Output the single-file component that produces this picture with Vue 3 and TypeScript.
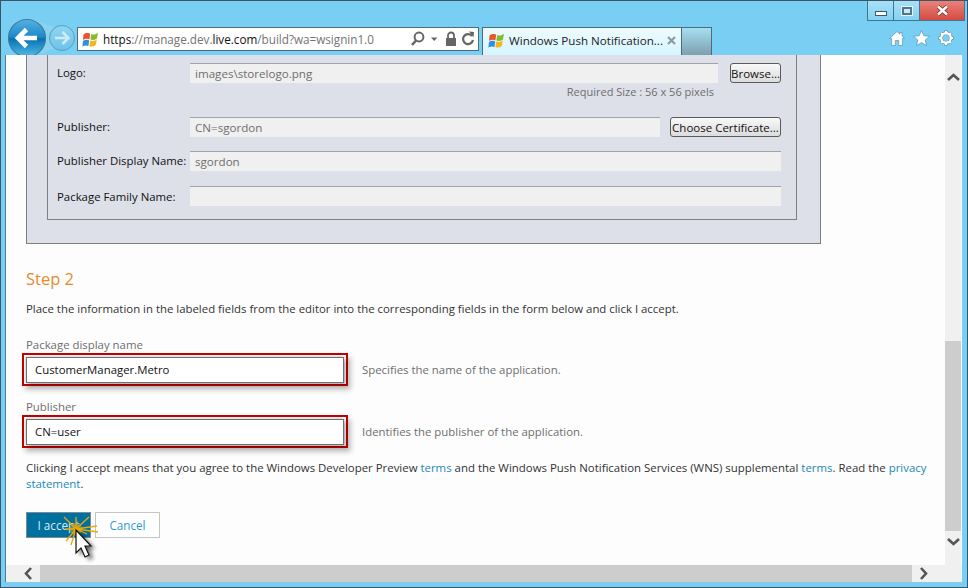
<script setup lang="ts">
const flagPanes = [
  { d: "M0.5 3.5 C2.5 2 5 1.6 7.2 2.6 L6.4 8.4 C4.4 7.4 2 7.8 0 9 Z", fill: "#e8562a" },
  { d: "M8.2 3 C10.4 4 12.6 3.6 15 1.8 L14 7.4 C11.8 9 9.6 9.4 7.4 8.6 Z", fill: "#86bc2b" },
  { d: "M0 10 C2 8.8 4.2 8.4 6.2 9.4 L5.4 15 C3.4 14 1.2 14.4 -0.6 15.6 Z", fill: "#2d8fe0" },
  { d: "M7.2 9.6 C9.4 10.4 11.6 10 13.8 8.4 L12.8 14 C10.6 15.6 8.4 16 6.4 15.2 Z", fill: "#f5b71d" },
];
</script>

<template>
  <div class="window">
    <header class="chrome">
      <div class="caption">
        <button class="cap cap-min"><span class="min-glyph"></span></button>
        <button class="cap cap-max"><span class="max-glyph"></span></button>
        <button class="cap cap-close">
          <svg width="15" height="11" viewBox="0 0 15 11">
            <path d="M3 1.5 L12 9.5 M12 1.5 L3 9.5" stroke="#7c2f2a" stroke-width="4" />
            <path d="M3 1.5 L12 9.5 M12 1.5 L3 9.5" stroke="#fff" stroke-width="2.4" />
          </svg>
        </button>
      </div>
      <div class="navbar">
        <div class="nav-btns">
          <svg class="back" width="76" height="46" viewBox="0 0 76 46">
            <defs>
              <linearGradient id="backFill" x1="0" y1="0" x2="0" y2="1">
                <stop offset="0" stop-color="#55b2e0" />
                <stop offset="0.48" stop-color="#1c88c8" />
                <stop offset="0.52" stop-color="#0870b2" />
                <stop offset="1" stop-color="#52bbea" />
              </linearGradient>
              <linearGradient id="fwdFill" x1="0" y1="0" x2="0" y2="1">
                <stop offset="0" stop-color="#8ed6f4" />
                <stop offset="1" stop-color="#6cc3e8" />
              </linearGradient>
            </defs>
            <path d="M30 5 C38 6 42 11 52 12 L54 34 L40 40 Z" fill="#8ad3ef" />
            <circle cx="26" cy="24" r="18.5" fill="url(#backFill)" stroke="#3f7a9e" stroke-width="1.2" />
            <path d="M17 24 H36 M25.5 15.5 L17 24 L25.5 32.5" fill="none" stroke="#fff" stroke-width="4.6" />
            <circle cx="61" cy="24" r="12.5" fill="url(#fwdFill)" stroke="#5d9dbd" stroke-width="1" />
            <path d="M54 24 H67 M61.5 18 L67.5 24 L61.5 30" fill="none" stroke="#cfe9f5" stroke-width="2.6" />
          </svg>
        </div>
        <div class="address">
          <svg class="flag" width="17" height="17" viewBox="-1 0 17 17">
            <path v-for="p in flagPanes" :key="p.d" :d="p.d" :fill="p.fill" />
          </svg>
          <span class="url"><b>https</b>://manage.dev.<b>live.com</b>/build?wa=wsignin1.0</span>
          <svg class="addr-icons" width="66" height="18" viewBox="0 0 66 18">
            <circle cx="9" cy="7" r="4.4" fill="none" stroke="#666" stroke-width="2" />
            <path d="M6 10.5 L2 15" stroke="#666" stroke-width="2.6" />
            <path d="M21 7.5 H27.5 L24.2 11 Z" fill="#666" />
            <path d="M38 8 V5.5 A3 3 0 0 1 44 5.5 V8" fill="none" stroke="#666" stroke-width="1.8" />
            <rect x="36" y="8" width="10" height="8" fill="#666" />
            <path d="M62 6 A5 5 0 1 0 63 10" fill="none" stroke="#666" stroke-width="2.2" />
            <path d="M59 1.5 L64 2 L63.5 7.5 Z" fill="#666" />
          </svg>
        </div>
        <div class="tab">
          <svg class="flag" width="17" height="17" viewBox="-1 0 17 17">
            <path v-for="p in flagPanes" :key="p.d" :d="p.d" :fill="p.fill" />
          </svg>
          <span class="tab-title">Windows Push Notification...</span>
          <svg class="tab-x" width="9" height="9" viewBox="0 0 9 9"><path d="M1 1 L8 8 M8 1 L1 8" stroke="#8d9aa1" stroke-width="2.2" /></svg>
        </div>
        <div class="new-tab"></div>
        <div class="tools">
          <svg width="16" height="15" viewBox="0 0 16 15"><path d="M8 0.5 L11 3.2 V1.5 H13 V5 L15.5 7.5 H13.4 V14.5 H9.7 V9.5 H6.3 V14.5 H2.6 V7.5 H0.5 Z" fill="#fff" stroke="#4f87a3" stroke-width="0.6" /></svg>
          <svg width="17" height="16" viewBox="0 0 17 16"><path d="M8.5 0.5 L10.8 5.8 L16.5 6.2 L12.2 10 L13.5 15.5 L8.5 12.6 L3.5 15.5 L4.8 10 L0.5 6.2 L6.2 5.8 Z" fill="#fff" stroke="#4f87a3" stroke-width="0.6" /></svg>
          <svg width="16" height="16" viewBox="0 0 16 16">
            <g stroke="#4f87a3" fill="none">
              <circle cx="8" cy="8" r="4.8" stroke-width="3.4" />
              <path d="M8 0.5 V3.5 M8 12.5 V15.5 M0.5 8 H3.5 M12.5 8 H15.5 M2.7 2.7 L4.8 4.8 M11.2 11.2 L13.3 13.3 M13.3 2.7 L11.2 4.8 M4.8 11.2 L2.7 13.3" stroke-width="3" />
            </g>
            <g stroke="#fff" fill="none">
              <circle cx="8" cy="8" r="4.8" stroke-width="2.4" />
              <path d="M8 1 V3.5 M8 12.5 V15 M1 8 H3.5 M12.5 8 H15 M3 3 L4.8 4.8 M11.2 11.2 L13 13 M13 3 L11.2 4.8 M4.8 11.2 L3 13" stroke-width="2.2" />
            </g>
          </svg>
        </div>
      </div>
    </header>

    <div class="viewport">
      <div class="view-main">
        <main class="page">
          <section class="panel">
            <div class="manifest">
              <div class="row row-logo">
                <label>Logo:</label>
                <div class="field">images\storelogo.png</div>
                <button class="win-btn btn-browse">Browse...</button>
              </div>
              <p class="req">Required Size : 56 x 56 pixels</p>
              <div class="row row-pub">
                <label>Publisher:</label>
                <div class="field">CN=sgordon</div>
                <button class="win-btn btn-cert">Choose Certificate...</button>
              </div>
              <div class="row row-disp">
                <label>Publisher Display Name:</label>
                <div class="field">sgordon</div>
              </div>
              <div class="row row-fam">
                <label>Package Family Name:</label>
                <div class="field"></div>
              </div>
            </div>
          </section>

          <h2>Step 2</h2>
          <p class="intro">Place the information in the labeled fields from the editor into the corresponding fields in the form below and click I accept.</p>

          <div class="lbl lbl-first">Package display name</div>
          <div class="entry">
            <div class="hl"><div class="text-in">CustomerManager.Metro</div></div>
            <span class="hint">Specifies the name of the application.</span>
          </div>
          <div class="lbl lbl-second">Publisher</div>
          <div class="entry">
            <div class="hl"><div class="text-in">CN=user</div></div>
            <span class="hint">Identifies the publisher of the application.</span>
          </div>

          <p class="legal">Clicking I accept means that you agree to the Windows Developer Preview <a>terms</a> and the Windows Push Notification Services (WNS) supplemental <a>terms</a>. Read the <a>privacy statement</a>.</p>

          <div class="actions">
            <button class="accept">I accept</button>
            <button class="cancel">Cancel</button>
            <svg class="pointer" width="64" height="64" viewBox="0 0 64 64">
              <defs>
                <filter id="curShadow" x="-50%" y="-50%" width="200%" height="200%"><feGaussianBlur stdDeviation="2.2" /></filter>
              </defs>
              <circle cx="25" cy="21" r="6" fill="#8f9a3a" opacity="0.8" />
              <g stroke="#eda808" stroke-width="1.3" fill="none">
                <path d="M25 21 L25 9 M25 21 L13 9 M25 21 L38 9 M25 21 L46 18 M25 21 L47 24 M25 21 L14 21 M25 21 L15 33 M25 21 L20 37 M25 21 L36 26" />
              </g>
              <path d="M25 22 V45 L30 40 L34 49 L38 47 L34 38 L40 38 Z" fill="#111" opacity="0.65" filter="url(#curShadow)" transform="translate(4 3)" />
              <path d="M25 22 V45 L30 40 L34 49 L38 47 L34 38 L40 38 Z" fill="#fff" stroke="#111" stroke-width="1.2" />
            </svg>
          </div>
        </main>
        <aside class="vscroll">
          <svg width="13" height="8" viewBox="0 0 13 8"><path d="M1 7 L6.5 2 L12 7" fill="none" stroke="#555" stroke-width="2.6" /></svg>
          <div class="vtrack"><div class="vthumb"></div></div>
          <svg width="13" height="8" viewBox="0 0 13 8"><path d="M1 1 L6.5 6 L12 1" fill="none" stroke="#555" stroke-width="2.6" /></svg>
        </aside>
      </div>
      <div class="hscroll">
        <svg width="8" height="13" viewBox="0 0 8 13"><path d="M7 1 L2 6.5 L7 12" fill="none" stroke="#555" stroke-width="2.6" /></svg>
        <div class="hthumb"></div>
        <svg width="8" height="13" viewBox="0 0 8 13"><path d="M1 1 L6 6.5 L1 12" fill="none" stroke="#555" stroke-width="2.6" /></svg>
      </div>
    </div>
  </div>
</template>

<style>
html, body { margin: 0; overflow: hidden; }
</style>

<style scoped>
* { box-sizing: border-box; }
.window {
  width: 968px;
  height: 588px;
  background: #78cff3;
  border: 1px solid #3c5566;
  padding: 0 5px 5px 4px;
  display: flex;
  flex-direction: column;
  font-family: "Open Sans", "Noto Sans", sans-serif;
  font-size: 11.3px;
  position: relative;
  overflow: hidden;
}
.chrome { height: 54px; position: relative; flex: none; }
.caption {
  position: absolute;
  top: 0;
  right: -3px;
  display: flex;
  height: 20px;
  border: 1px solid #3f7590;
  border-top: 0;
}
.cap {
  padding: 0;
  border: 0;
  display: flex;
  align-items: center;
  justify-content: center;
  width: 26px;
  background: linear-gradient(#a8e0f7, #84d2f2);
  border-right: 1px solid #3f7590;
}
.cap-close { width: 44px; background: linear-gradient(#e8837a, #d54a40); border-right: 0; }
.min-glyph { width: 12px; height: 5px; background: #fff; border: 1px solid #3c5b6c; margin-top: 6px; }
.max-glyph { width: 10px; height: 8px; border: 2px solid #55768a; background: #c6ebf8; box-shadow: 0 0 0 1px #e2f5fc; }
.navbar {
  position: absolute;
  left: -4px;
  right: 0;
  top: 15px;
  height: 39px;
  display: flex;
  align-items: flex-end;
}
.nav-btns { width: 76px; height: 46px; flex: none; margin-bottom: -5px; align-self: flex-end; }
.back { display: block; }
.address {
  width: 402px;
  height: 24px;
  margin-bottom: 4px;
  background: #fff;
  border: 1px solid #4e6b7c;
  display: flex;
  align-items: center;
  padding-left: 4px;
  flex: none;
}
.flag { flex: none; }
.url { margin-left: 4px; font-size: 11.7px; color: #737373; white-space: nowrap; flex: 1; }
.url b { font-weight: 400; color: #111; }
.addr-icons { margin-right: 2px; flex: none; }
.tab {
  margin-left: 3px;
  width: 200px;
  height: 28px;
  background: linear-gradient(#eefbff, #d6f5ff);
  border: 1px solid #4e6b7c;
  border-bottom: 0;
  display: flex;
  align-items: center;
  padding: 0 0 2px 5px;
  flex: none;
}
.tab-title { font-size: 11.6px; color: #222; margin-left: 4px; white-space: nowrap; flex: 1; }
.tab-x { margin-right: 5px; }
.new-tab {
  width: 30px;
  height: 28px;
  background: linear-gradient(#a6def2, #7e9fae);
  border: 1px solid #4e6b7c;
  border-left: 0;
  border-bottom: 0;
  flex: none;
}
.tools {
  margin-left: auto;
  margin-right: 8px;
  margin-bottom: 9px;
  display: flex;
  gap: 8px;
  align-items: center;
}
.viewport {
  flex: 1;
  min-height: 0;
  display: flex;
  flex-direction: column;
  border-left: 1px solid #4e7f98;
  background: #fdfdfd;
}
.view-main { flex: 1; min-height: 0; display: flex; }
.page { width: 939px; padding-left: 20px; padding-right: 12px; flex: none; background: #fdfdfd; color: #3a3a3a; position: relative; }
.panel {
  width: 795px;
  height: 189px;
  background: #dde0e8;
  border: 1px solid #7f7f7f;
  border-top: 0;
  padding: 0 23px 0 20px;
}
.manifest {
  height: 165px;
  border: 1px solid #7f7f7f;
  border-top: 0;
  padding: 8px 15px 0 9px;
  color: #111;
}
.row { display: flex; align-items: center; height: 20px; }
.row label { width: 133px; flex: none; font-size: 11.4px; white-space: nowrap; position: relative; top: -1px; }
.row-fam label { top: 0; }
.field {
  flex: 1;
  height: 20px;
  background: #f0f0f0;
  border-top: 1px solid #a2a2aa;
  color: #6e6e6e;
  padding-left: 5px;
  line-height: 19px;
  font-size: 11.6px;
}
.row-pub { margin-top: 10px; }
.row-disp { margin-top: 14px; }
.row-fam { margin-top: 15px; }
.req { margin: 0; height: 24px; text-align: right; padding: 1px 67px 0 0; color: #6e6e6e; font-size: 11px; line-height: 16px; }
.win-btn {
  height: 20px;
  border: 1px solid #5a5a5a;
  border-radius: 3px;
  background: linear-gradient(#f8f8f8, #dcdcdc);
  font: inherit;
  font-size: 11.5px;
  color: #111;
  padding: 0;
  flex: none;
  white-space: nowrap;
}
.btn-browse { width: 51px; margin-left: 12px; }
.btn-cert { width: 111px; margin-left: 10px; }
h2 {
  margin: 24px 0 0;
  height: 22px;
  line-height: 22px;
  font-size: 16.5px;
  font-weight: 400;
  color: #e58b2c;
}
.intro { margin: 11px 0 0; line-height: 16px; font-size: 11.4px; color: #333; white-space: nowrap; }
.lbl { color: #6e6e6e; font-size: 11.4px; line-height: 16px; }
.lbl-first { margin-top: 20px; }
.lbl-second { margin-top: 13px; }
.entry { display: flex; align-items: center; margin: 0 0 0 -4px; height: 33px; }
.hl {
  width: 326px;
  height: 33px;
  border: 2px solid #c00000;
  padding: 2px 2px 1px;
  flex: none;
  box-shadow: 3px 4px 5px rgba(0, 0, 0, 0.22);
}
.text-in {
  height: 26px;
  background: #fff;
  border: 1px solid #707070;
  padding-left: 8px;
  line-height: 24px;
  font-size: 11.4px;
  color: #111;
  box-shadow: 0 0 3px rgba(0, 0, 0, 0.3), 3px 3px 4px rgba(0, 0, 0, 0.2);
}
.hint { margin-left: 14px; color: #6e6e6e; font-size: 11.4px; }
.legal { margin: 12px 0 0; line-height: 16px; font-size: 11.43px; color: #333; }
.legal a { color: #1c87b8; }
.actions { margin-top: 20px; display: flex; gap: 4px; position: relative; }
.accept, .cancel { width: 65px; height: 26px; padding: 0; font: inherit; font-size: 11.7px; }
.accept { background: #00709f; border: 1px solid #7a8a92; color: #dceef6; }
.cancel { background: #fff; border: 1px solid #c4c4c4; color: #2d9ad6; }
.pointer { position: absolute; left: 25px; top: -4px; }
.vscroll {
  width: 16px;
  flex: none;
  background: #f0f0f0;
  display: flex;
  flex-direction: column;
  align-items: center;
  padding-top: 18px;
  padding-bottom: 19px;
}
.vtrack { flex: 1; width: 100%; display: flex; align-items: flex-end; padding-bottom: 7px; }
.vthumb { width: 100%; height: 190px; background: #cdcdcd; }
.hscroll {
  height: 17px;
  flex: none;
  background: #f0f0f0;
  display: flex;
  align-items: center;
  padding: 0 34px 0 18px;
}
.hthumb { width: 872px; height: 100%; background: #cdcdcd; margin: 0 8px 0 8px; }
</style>
